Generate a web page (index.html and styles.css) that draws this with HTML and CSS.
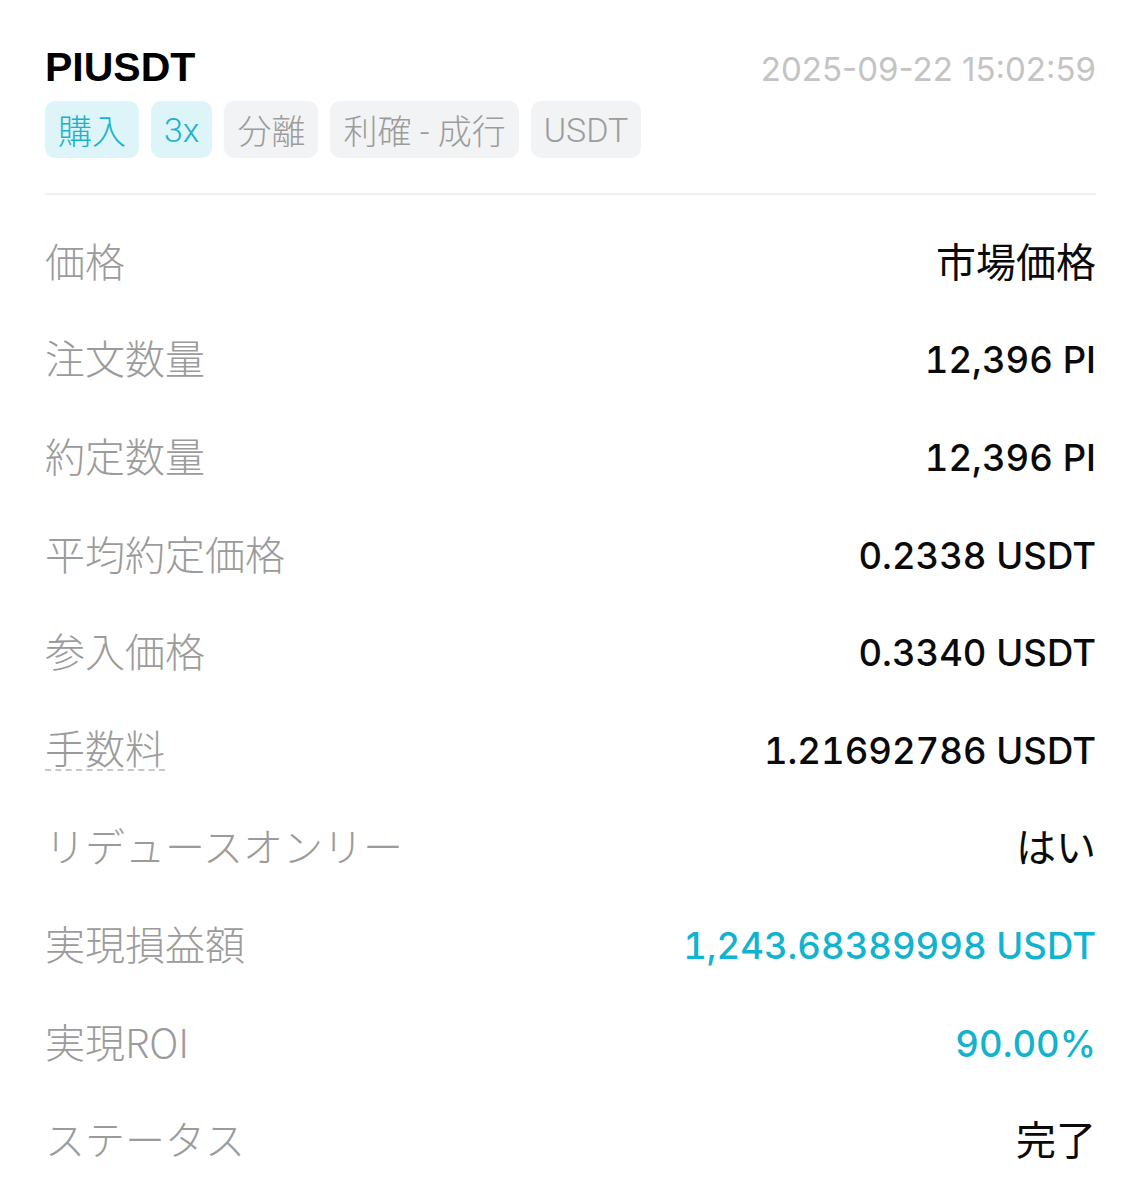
FILE: index.html
```html
<!DOCTYPE html>
<html lang="ja">
<head>
<meta charset="utf-8">
<link rel="stylesheet" href="styles.css">
</head>
<body>
<div class="page">
  <div class="header">
    <div class="head-top">
      <div class="title">PIUSDT</div>
      <div class="date">2025-09-22 15:02:59</div>
    </div>
    <div class="tags">
      <span class="tag teal">購入</span>
      <span class="tag teal">3x</span>
      <span class="tag gray">分離</span>
      <span class="tag gray">利確 - 成行</span>
      <span class="tag gray">USDT</span>
    </div>
  </div>
  <div class="divider"></div>
  <div class="rows">
    <div class="row"><span class="label">価格</span><span class="value cjk">市場価格</span></div>
    <div class="row"><span class="label">注文数量</span><span class="value">12,396 PI</span></div>
    <div class="row"><span class="label">約定数量</span><span class="value">12,396 PI</span></div>
    <div class="row"><span class="label">平均約定価格</span><span class="value">0.2338 USDT</span></div>
    <div class="row"><span class="label">参入価格</span><span class="value">0.3340 USDT</span></div>
    <div class="row"><span class="label dashed">手数料</span><span class="value">1.21692786 USDT</span></div>
    <div class="row"><span class="label">リデュースオンリー</span><span class="value cjk">はい</span></div>
    <div class="row"><span class="label">実現損益額</span><span class="value teal-text">1,243.68389998 USDT</span></div>
    <div class="row"><span class="label">実現ROI</span><span class="value teal-text">90.00%</span></div>
    <div class="row"><span class="label">ステータス</span><span class="value cjk">完了</span></div>
  </div>
</div>
</body>
</html>
```
FILE: styles.css
```css
html, body {
  margin: 0;
  padding: 0;
  background: #ffffff;
}
body {
  font-family: Inter, "Noto Sans CJK JP", sans-serif;
}
.page {
  padding: 44px 45px 0 45px;
}
.head-top {
  display: flex;
  justify-content: space-between;
  align-items: baseline;
}
.title {
  font-family: "Liberation Sans", Arial, sans-serif;
  font-size: 41px;
  font-weight: 700;
  color: #000;
  letter-spacing: 0;
  line-height: 46px;
}
.date {
  font-size: 33px;
  color: #c4c4c4;
  line-height: 46px;
}
.tags {
  display: flex;
  gap: 12px;
  margin-top: 9px;
}
.tag {
  height: 57px;
  padding: 0 13px;
  border-radius: 10px;
  display: flex;
  align-items: center;
  font-size: 34px;
  font-family: Roboto, "Noto Sans CJK JP", sans-serif;
  font-weight: 300;
}
.tag.teal {
  background: #ddf5f8;
  color: #19b3cc;
}
.tag.gray {
  background: #f2f3f5;
  color: #9c9c9c;
}
.divider {
  height: 2px;
  background: #f0f0f0;
  margin-top: 35px;
}
.rows {
  padding-top: 16px;
}
.row {
  height: 97.6px;
  display: flex;
  justify-content: space-between;
  align-items: center;
}
.label {
  font-family: "Noto Sans CJK JP", sans-serif;
  font-weight: 300;
  font-size: 40px;
  color: #9b9b9b;
  line-height: 48px;
}
.label.dashed {
  border-bottom: 2px dashed #c8c8c8;
  line-height: 44px;
}
.value {
  font-size: 36.5px;
  font-weight: 500;
  color: #0a0a0a;
  font-feature-settings: "tnum" 1;
  padding-top: 6px;
}
.value.cjk {
  font-family: "Noto Sans CJK JP", sans-serif;
  font-weight: 400;
  font-size: 40px;
  padding-top: 0;
}
.teal-text {
  color: #12b3cf;
}
```
